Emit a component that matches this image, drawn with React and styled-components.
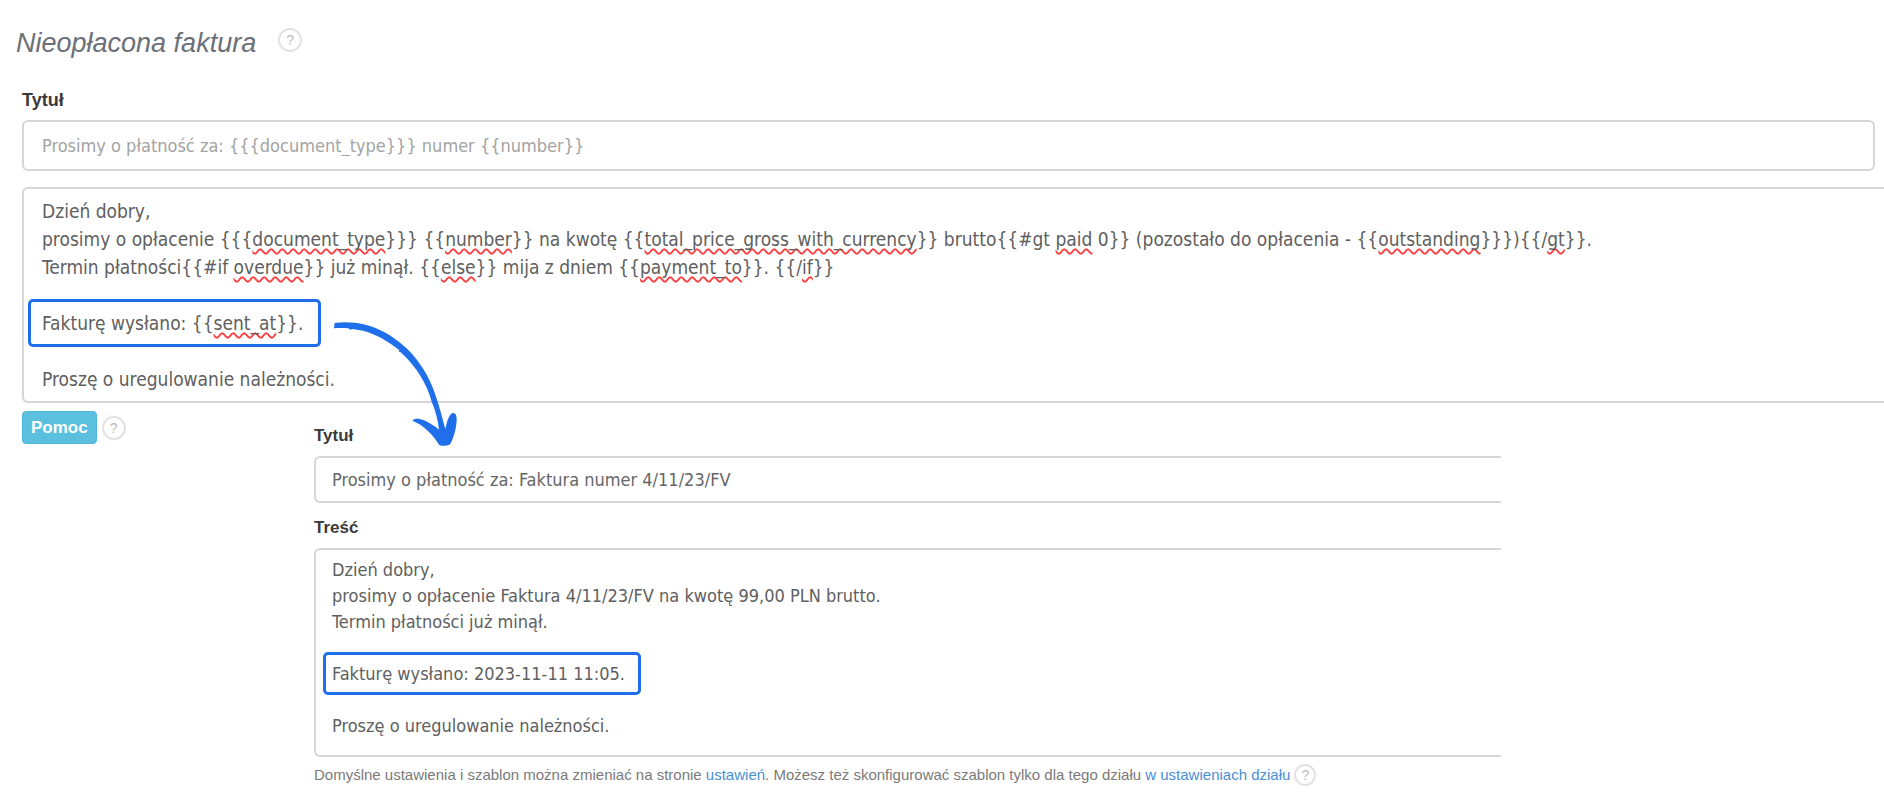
import React, { useState } from 'react'
import styled, { createGlobalStyle } from 'styled-components'

const GlobalStyle = createGlobalStyle`
  * {
    box-sizing: border-box;
  }

  body {
    margin: 0;
    background: #fff;
    color: #555;
    font-family: 'Liberation Sans', Arial, sans-serif;
    overflow-x: hidden;
  }
`

const Page = styled.main`
  position: relative;
  padding: 28px 0 24px 22px;
`

const Header = styled.header`
  display: flex;
  align-items: flex-start;
  gap: 22px;
  margin-left: -6px;
`

const Heading = styled.h1`
  margin: 0;
  font-size: 27px;
  font-style: italic;
  font-weight: 400;
  line-height: 30px;
  color: #6b7078;
`

const HelpButton = styled.button`
  flex: none;
  width: ${({ $small }) => ($small ? '22px' : '24px')};
  height: ${({ $small }) => ($small ? '22px' : '24px')};
  padding: 0;
  border: 2px solid #e2e2e2;
  border-radius: 50%;
  background: #fff;
  color: #bbb;
  font: 14px 'Liberation Sans', Arial, sans-serif;
  line-height: 18px;
`

const Label = styled.label`
  display: block;
  margin-bottom: 10px;
  font-size: ${({ $compact }) => ($compact ? '17px' : '18px')};
  font-weight: 700;
  line-height: 20px;
  color: #3a3a3a;
`

const TextInput = styled.input`
  display: block;
  width: 100%;
  height: ${({ $compact }) => ($compact ? '47px' : '51px')};
  padding: ${({ $compact }) => ($compact ? '0 16px' : '0 18px')};
  border: 2px solid #d6d6d6;
  border-right-width: ${({ $open }) => ($open ? '0' : '2px')};
  border-radius: ${({ $open }) => ($open ? '6px 0 0 6px' : '6px')};
  background: #fff;
  color: #666;
  font-family: 'DejaVu Sans Condensed', Tahoma, sans-serif;
  font-size: 18px;

  &::placeholder {
    color: #a3a3a3;
    opacity: 1;
  }
`

const Editor = styled.div`
  position: relative;
  border: 2px solid #d6d6d6;
  border-right: 0;
  border-radius: 6px 0 0 6px;
  background: #fff;
  font-family: 'DejaVu Sans Condensed', Tahoma, sans-serif;
  font-size: ${({ $compact }) => ($compact ? '18px' : '19px')};
  line-height: ${({ $compact }) => ($compact ? '26px' : '28px')};
`

const TextArea = styled.textarea`
  position: relative;
  display: block;
  width: 100%;
  padding: ${({ $compact }) => ($compact ? '7px 16px 16px' : '8px 18px')};
  border: 0;
  outline: 0;
  resize: none;
  overflow: hidden;
  background: transparent;
  color: #606060;
  font: inherit;
  line-height: inherit;
`

// lies under the textarea and carries the spelling marks and the frame
const Marks = styled.div`
  position: absolute;
  inset: 0;
  padding: ${({ $compact }) => ($compact ? '7px 16px 16px' : '8px 18px')};
  color: transparent;
  white-space: pre-wrap;
  user-select: none;
`

const Misspelled = styled.span`
  text-decoration: underline wavy #ff4040 2px;
  text-decoration-skip-ink: none;
  text-underline-offset: 2px;
`

const Frame = styled.span`
  padding: ${({ $compact }) => ($compact ? '8px 13px 8px 6px' : '10px 15px 10px 11px')};
  margin-left: ${({ $compact }) => ($compact ? '-9px' : '-14px')};
  border: 3px solid #1f6fea;
  border-radius: 5px;
`

const TemplateForm = styled.section`
  margin-top: 32px;
`

const TitleField = styled.div`
  margin: 0 9px 16px 0;
`

const Lower = styled.div`
  display: flex;
  align-items: flex-start;
  margin-top: 8px;
`

const Actions = styled.div`
  display: flex;
  flex: none;
  align-items: center;
  gap: 5px;
  width: 292px;
`

const PomocButton = styled.button`
  height: 33px;
  padding: 0 8px;
  border: 1px solid #4db8da;
  border-radius: 4px;
  background: #5bc0de;
  color: #fff;
  font: bold 17px 'Liberation Sans', Arial, sans-serif;
`

const Preview = styled.section`
  flex: 0 1 1187px;
  margin-top: 15px;
`

const PreviewField = styled.div`
  margin-bottom: 15px;
`

const Note = styled.p`
  display: flex;
  align-items: center;
  gap: 4px;
  margin: 7px 0 0;
  font-size: 15px;
  line-height: 22px;
  white-space: nowrap;
  color: #7a7a7a;
`

const Link = styled.a`
  color: #4a8fd3;
  text-decoration: none;
`

const Arrow = styled.svg`
  position: absolute;
  left: 320px;
  top: 310px;
  width: 150px;
  height: 150px;
  fill: #1f6fea;
  pointer-events: none;
`

const templateText = `Dzień dobry,
prosimy o opłacenie {{{document_type}}} {{number}} na kwotę {{total_price_gross_with_currency}} brutto{{#gt paid 0}} (pozostało do opłacenia - {{outstanding}}}){{/gt}}.
Termin płatności{{#if overdue}} już minął. {{else}} mija z dniem {{payment_to}}. {{/if}}

Fakturę wysłano: {{sent_at}}.

Proszę o uregulowanie należności.`

const previewText = `Dzień dobry,
prosimy o opłacenie Faktura 4/11/23/FV na kwotę 99,00 PLN brutto.
Termin płatności już minął.

Fakturę wysłano: 2023-11-11 11:05.

Proszę o uregulowanie należności.`

const unknownWords = /(document_type|number|total_price_gross_with_currency|\bpaid\b|outstanding|(?<=\/)gt|overdue|else|payment_to|(?<=\/)if|sent_at)/

function markWords (line) {
  return line
    .split(unknownWords)
    .map((part, i) => (i % 2 ? <Misspelled key={i}>{part}</Misspelled> : part))
}

function MarkedEditor ({ initial, spelling, compact, ...rest }) {
  const [value, setValue] = useState(initial)

  return (
    <Editor $compact={compact}>
      <Marks $compact={compact} aria-hidden='true'>
        {value.split('\n').map((line, i) => {
          const content = spelling ? markWords(line) : line
          return (
            <React.Fragment key={i}>
              {line.startsWith('Fakturę wysłano') ? (
                <Frame $compact={compact}>{content}</Frame>
              ) : (
                content
              )}
              {'\n'}
            </React.Fragment>
          )
        })}
      </Marks>
      <TextArea
        $compact={compact}
        rows={7}
        spellCheck={false}
        value={value}
        onChange={e => setValue(e.target.value)}
        {...rest}
      />
    </Editor>
  )
}

function Help ({ small }) {
  return (
    <HelpButton type='button' $small={small} aria-label='Pomoc'>
      ?
    </HelpButton>
  )
}

export default function App () {
  return (
    <Page>
      <GlobalStyle />
      <Header>
        <Heading>Nieopłacona faktura</Heading>
        <Help />
      </Header>

      <TemplateForm>
        <TitleField>
          <Label htmlFor='template-title'>Tytuł</Label>
          <TextInput
            id='template-title'
            placeholder='Prosimy o płatność za: {{{document_type}}} numer {{number}}'
          />
        </TitleField>
        <MarkedEditor initial={templateText} spelling aria-label='Treść szablonu' />
      </TemplateForm>

      <Lower>
        <Actions>
          <PomocButton type='button'>Pomoc</PomocButton>
          <Help />
        </Actions>

        <Preview>
          <PreviewField>
            <Label $compact htmlFor='preview-title'>Tytuł</Label>
            <TextInput
              $compact
              $open
              id='preview-title'
              defaultValue='Prosimy o płatność za: Faktura numer 4/11/23/FV'
            />
          </PreviewField>
          <Label $compact htmlFor='preview-body'>Treść</Label>
          <MarkedEditor compact id='preview-body' initial={previewText} />
          <Note>
            <span>
              Domyślne ustawienia i szablon można zmieniać na stronie{' '}
              <Link href='#ustawienia'>ustawień</Link>. Możesz też skonfigurować
              szablon tylko dla tego działu{' '}
              <Link href='#dzial'>w ustawieniach działu</Link>
            </span>
            <Help small />
          </Note>
        </Preview>
      </Lower>

      <Arrow viewBox='0 0 450 450' aria-hidden='true'>
        <path d='M44 39 C75 35 112 37 150 48 C190 61 228 85 262 117 C300 155 326 198 343 245 C357 285 367 322 376 358 C380 336 386 318 394 311 C402 306 410 311 410 328 C409 358 401 384 391 402 C385 408 364 410 357 404 C342 378 312 345 277 332 C283 324 298 325 312 331 C331 340 347 350 357 359 C354 330 346 300 335 275 C322 225 290 170 242 127 L237 126 L238 121 C205 93 170 74 130 62 L97 57 L91 59 L85 55 C70 54 55 54 42 55 Z' />
      </Arrow>
    </Page>
  )
}
